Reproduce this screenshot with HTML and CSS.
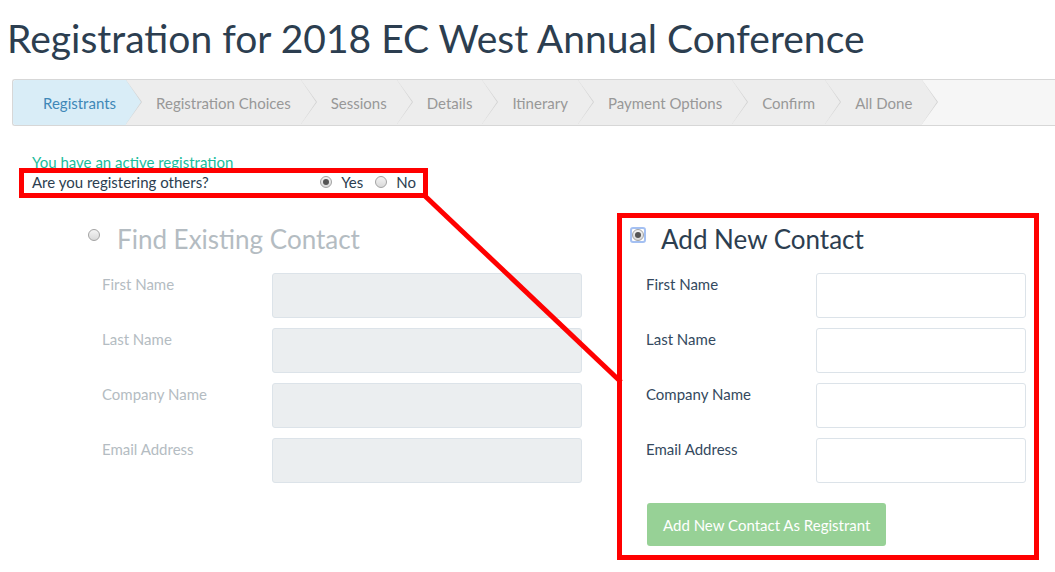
FILE: index.html
```html
<!DOCTYPE html>
<html lang="en">
<head>
<meta charset="utf-8">
<title>Registration for 2018 EC West Annual Conference</title>
<link rel="stylesheet" href="styles.css">
</head>
<body>
<div class="page">
  <h1 class="title">Registration for 2018 EC West Annual Conference</h1>
  <ol class="steps">
    <li class="step active">Registrants</li>
    <li class="step">Registration Choices</li>
    <li class="step">Sessions</li>
    <li class="step">Details</li>
    <li class="step">Itinerary</li>
    <li class="step">Payment Options</li>
    <li class="step">Confirm</li>
    <li class="step">All Done</li>
  </ol>

  <div class="notice">
    <p class="active-msg">You have an active registration</p>
    <div class="question">
      <span>Are you registering others?</span>
      <div class="choices">
        <label class="choice"><span class="radio checked"></span>Yes</label>
        <label class="choice"><span class="radio"></span>No</label>
      </div>
    </div>
  </div>

  <div class="contacts">
    <section class="contact find">
      <div class="contact-head">
        <span class="radio"></span>
        <h2 class="contact-title">Find Existing Contact</h2>
      </div>
      <div class="form-grid">
        <label class="field-label">First Name</label><div class="input"></div>
        <label class="field-label">Last Name</label><div class="input"></div>
        <label class="field-label">Company Name</label><div class="input"></div>
        <label class="field-label">Email Address</label><div class="input"></div>
      </div>
    </section>
    <section class="contact add">
      <div class="contact-head">
        <span class="radio checked focus"></span>
        <h2 class="contact-title">Add New Contact</h2>
      </div>
      <div class="form-grid">
        <label class="field-label">First Name</label><div class="input"></div>
        <label class="field-label">Last Name</label><div class="input"></div>
        <label class="field-label">Company Name</label><div class="input"></div>
        <label class="field-label">Email Address</label><div class="input"></div>
      </div>
      <button class="btn-add" type="button">Add New Contact As Registrant</button>
    </section>
  </div>

  <div class="annot annot-question"></div>
  <div class="annot annot-add"></div>
  <svg class="annot-line" width="1055" height="572" viewBox="0 0 1055 572">
    <line x1="425" y1="196" x2="621" y2="382" stroke="#ff0000" stroke-width="5"/>
  </svg>
</div>
</body>
</html>
```

FILE: styles.css
```css
html, body {
  margin: 0;
  padding: 0;
  background: #ffffff;
}

body {
  font-family: Lato, "Open Sans", "Liberation Sans", sans-serif;
  overflow: hidden;
}

.page {
  position: relative;
  width: 1055px;
  height: 572px;
  overflow: hidden;
}

.title {
  margin: 15px 0 0 0;
  padding-left: 7px;
  font-size: 39px;
  line-height: 46px;
  font-weight: 400;
  color: #2c3e50;
}

/* Step breadcrumb */
.steps {
  list-style: none;
  margin: 18px 0 0 12px;
  padding: 0;
  display: flex;
  height: 45px;
  border: 1px solid #d7d7d7;
  border-right: none;
  border-radius: 3px 0 0 3px;
  background: #f6f6f6;
}

.step {
  position: relative;
  display: flex;
  align-items: center;
  padding: 0 10px 0 30px;
  background: #ededed;
  color: #989898;
  font-size: 15px;
  white-space: nowrap;
}

.step:first-child {
  padding-left: 30px;
  border-radius: 3px 0 0 3px;
}

.step::before,
.step::after {
  content: "";
  position: absolute;
  top: 0;
  width: 0;
  height: 0;
  border-top: 22.5px solid transparent;
  border-bottom: 22.5px solid transparent;
}

.step::before {
  right: -16px;
  border-left: 16px solid #d2d2d2;
  z-index: 1;
}

.step::after {
  right: -15px;
  border-left: 15px solid #ededed;
  z-index: 2;
}

.step.active {
  background: #d9edf7;
  color: #3f88b8;
}

.step.active::after {
  border-left-color: #d9edf7;
}

/* Notice */
.notice {
  margin-top: 26px;
  padding-left: 32px;
  font-size: 15px;
  line-height: 20px;
}

.active-msg {
  margin: 0;
  color: #1abc9c;
}

.question {
  display: flex;
  justify-content: space-between;
  align-items: center;
  width: 384px;
  color: #2c3e50;
}

.choices {
  display: flex;
  gap: 12px;
}

.choice {
  display: inline-flex;
  align-items: center;
  gap: 9px;
}

.radio {
  position: relative;
  display: inline-block;
  width: 10px;
  height: 10px;
  border: 1px solid #a3a3a3;
  border-radius: 50%;
  background: linear-gradient(#f4f4f4, #d9d9d9);
  flex: none;
}

.radio.checked::after {
  content: "";
  position: absolute;
  left: 2px;
  top: 2px;
  width: 6px;
  height: 6px;
  border-radius: 50%;
  background: #555555;
}

.radio.focus::before {
  content: "";
  position: absolute;
  left: -3px;
  top: -3px;
  width: 12px;
  height: 12px;
  border: 2px solid #a4c0f2;
  border-radius: 3px;
}

/* Contacts */
.contacts {
  display: flex;
  gap: 50px;
  margin-top: 32px;
  padding-left: 88px;
}

.contact.find {
  width: 494px;
}

.contact.add {
  width: 394px;
}

.contact-head {
  display: flex;
  align-items: flex-start;
  gap: 17px;
  height: 30px;
}

.contact-head .radio {
  margin-top: 5px;
}

.add .contact-head {
  gap: 17px;
}

.contact-title {
  margin: 0;
  font-size: 26px;
  line-height: 30px;
  font-weight: 400;
  white-space: nowrap;
}

.find .contact-title {
  color: #b4bcc2;
}

.add .contact-title {
  color: #2c3e50;
}

.form-grid {
  display: grid;
  grid-template-columns: 170px 1fr;
  grid-auto-rows: 45px;
  row-gap: 10px;
  margin-top: 19px;
  padding-left: 14px;
}

.field-label {
  font-size: 15px;
  line-height: 20px;
  padding-top: 1px;
}

.find .field-label {
  color: #b4bcc2;
}

.add .field-label {
  color: #34495e;
}

.input {
  box-sizing: border-box;
  height: 45px;
  border: 1px solid #dce3e9;
  border-radius: 3px;
}

.find .input {
  background: #ebeef0;
}

.add .input {
  background: #ffffff;
}

.btn-add {
  display: block;
  margin: 20px 0 0 15px;
  height: 43px;
  padding: 0 16px;
  border: none;
  border-radius: 3px;
  background: #97d196;
  color: #ffffff;
  font-family: Lato, "Open Sans", "Liberation Sans", sans-serif;
  font-size: 15px;
}

/* Annotations lying over the screenshot */
.annot {
  position: absolute;
  box-sizing: border-box;
  border: 5px solid #ff0000;
  pointer-events: none;
}

.annot-question {
  left: 19px;
  top: 168px;
  width: 409px;
  height: 30px;
}

.annot-add {
  left: 617px;
  top: 213px;
  width: 422px;
  height: 347px;
}

.annot-line {
  position: absolute;
  left: 0;
  top: 0;
  pointer-events: none;
}
```
